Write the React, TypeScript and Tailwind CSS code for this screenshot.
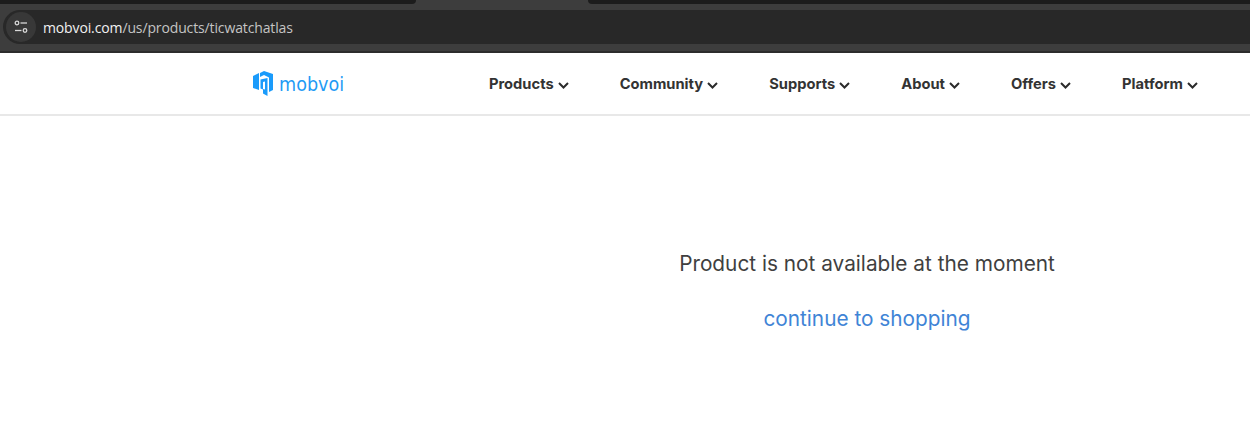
import React from 'react'

const NAV_ITEMS = ['Products', 'Community', 'Supports', 'About', 'Offers', 'Platform']

function Chevron() {
  return (
    <svg width="11" height="7" viewBox="0 0 11 7" fill="none" className="mt-[2px]">
      <path d="M1 1l4.5 4.5L10 1" stroke="#2b2b2b" strokeWidth="2" />
    </svg>
  )
}

function SiteInfoIcon() {
  return (
    <svg width="14" height="14" viewBox="0 0 14 14" fill="none" stroke="#d8d8d8" strokeWidth="1.3">
      <circle cx="3" cy="3" r="1.8" />
      <path d="M6.5 3h6.5" />
      <path d="M1 10.5h6.5" />
      <circle cx="11" cy="10.5" r="1.8" />
    </svg>
  )
}

function Logo() {
  return (
    <div className="flex items-center gap-[6px]">
      <svg width="20" height="25" viewBox="0 0 20 25">
        <path d="M0 5 6 2v17l-6-2Z" fill="#1a9bfb" />
        <path d="M7 2 11 0l9 3v16l-4 2V6.5L11 4 7 6Z" fill="#1a9bfb" />
        <path d="M7.5 8.5 14.5 7v18L10 22.5V18.5l-2.5-1Z" fill="#1a9bfb" />
        <path d="M10 11l2-.4v8l-2-.7Z" fill="#fff" />
      </svg>
      <span className="origin-left scale-x-[0.88] font-['DejaVu_Sans',sans-serif] text-[20px] leading-none text-[#1f9bf5]">
        mobvoi
      </span>
    </div>
  )
}

export default function App() {
  return (
    <div className="h-[440px] w-[1250px] overflow-hidden bg-white font-['Inter',sans-serif]">
      {/* Browser chrome */}
      <div className="flex h-[4px] gap-[172px] bg-[#3d3d3d]">
        <div className="h-full w-[416px] rounded-br-[6px] bg-[#1c1c1c]" />
        <div className="h-full flex-1 rounded-bl-[6px] bg-[#1c1c1c]" />
      </div>
      <div className="flex h-[49px] items-start border-b-2 border-[#2c2c2c] bg-[#3d3d3d] pl-[3px] pt-[6px]">
        <div className="flex h-[34px] w-full items-center rounded-l-[17px] bg-[#282828] pl-[3px]">
          <div className="flex h-[30px] w-[30px] items-center justify-center rounded-full bg-[#383838]">
            <SiteInfoIcon />
          </div>
          <div className="ml-[7px] font-['Open_Sans',sans-serif] text-[14px] tracking-[-0.13px] text-[#c4c4c4]">
            <span className="text-[#f1f1f1]">mobvoi.com</span>/us/products/ticwatchatlas
          </div>
        </div>
      </div>

      {/* Site header */}
      <header className="flex h-[63px] items-center justify-between border-b-2 border-[#e8e8e8] pl-[253px] pr-[52px]">
        <Logo />
        <nav className="flex items-center gap-[51px] pt-[2px]">
          {NAV_ITEMS.map((item) => (
            <div key={item} className="flex items-center gap-[4px] text-[14.7px] font-bold text-[#333]">
              <span>{item}</span>
              <Chevron />
            </div>
          ))}
        </nav>
      </header>

      {/* Empty state */}
      <main className="flex flex-col items-center pl-[484px] pt-[133px]">
        <p className="text-[20.8px] leading-[30px] text-[#3f3f3f]">Product is not available at the moment</p>
        <a className="mt-[25px] text-[20.8px] leading-[30px] text-[#3f84d6]">continue to shopping</a>
      </main>
    </div>
  )
}
